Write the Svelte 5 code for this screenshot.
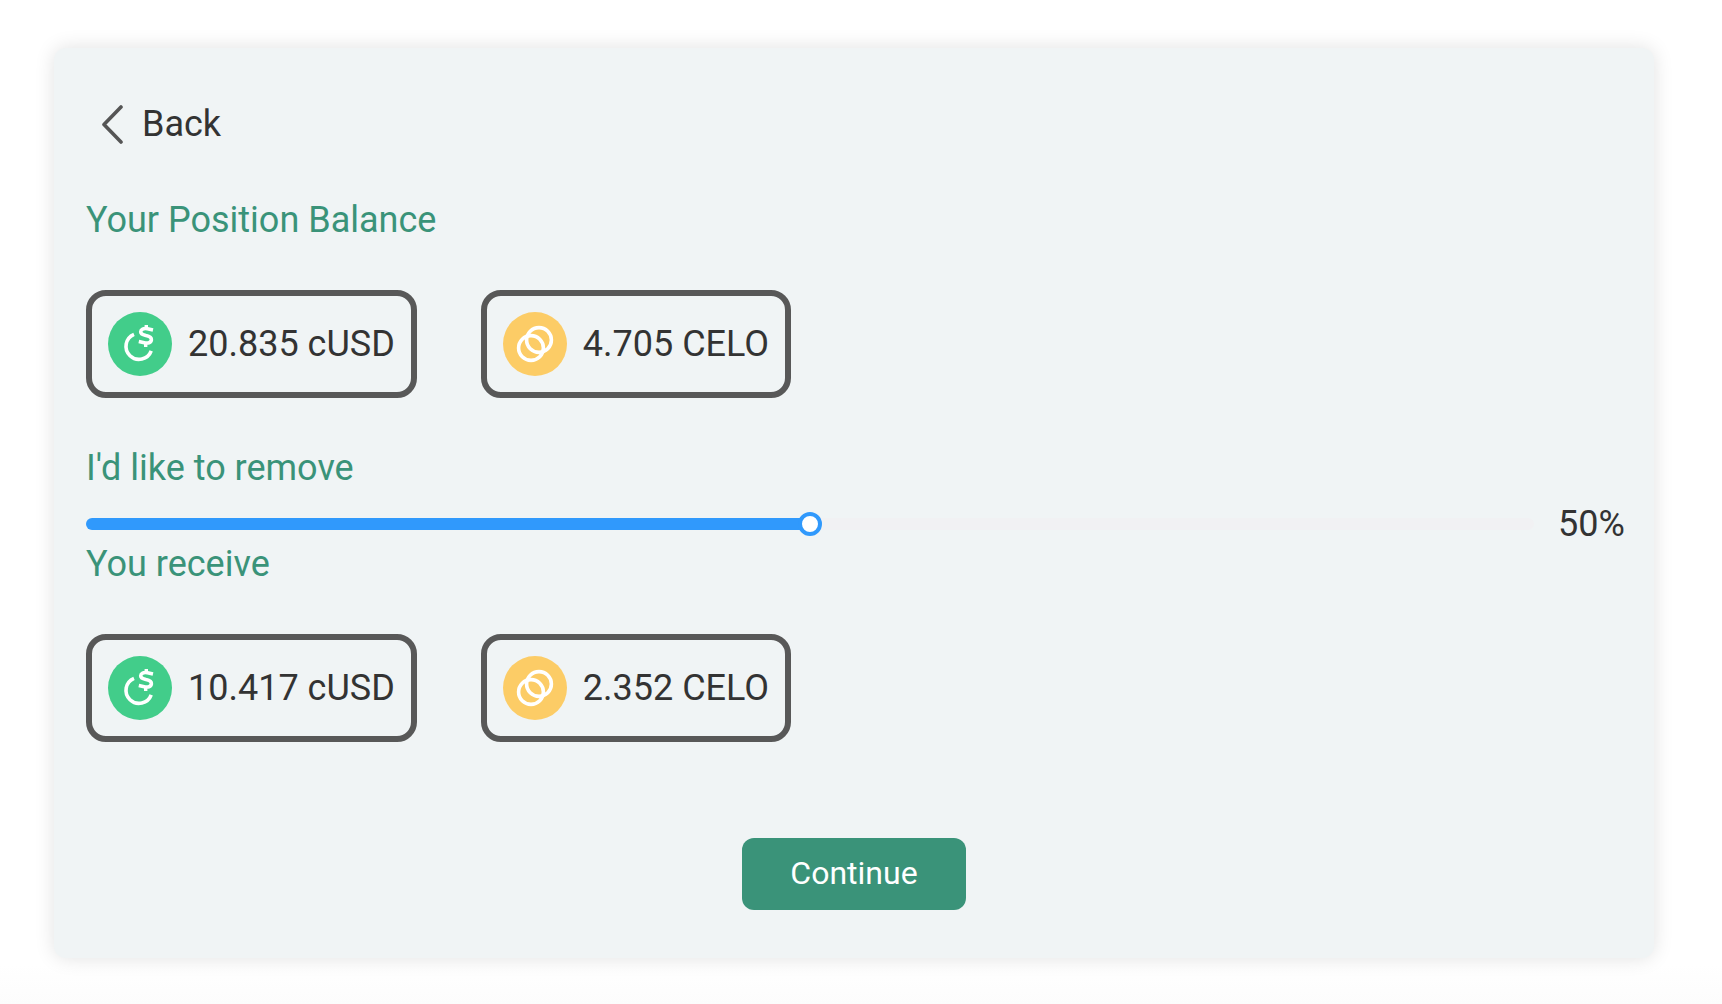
<script>
  let percent = $state(50);

  const position = [
    { token: 'cUSD', amount: '20.835' },
    { token: 'CELO', amount: '4.705' }
  ];
  const full = [
    { token: 'cUSD', amount: 20.8349 },
    { token: 'CELO', amount: 4.7049 }
  ];
  const received = $derived(
    full.map(({ token, amount }) => ({
      token,
      amount: (Math.floor(amount * percent * 10) / 1000).toFixed(3)
    }))
  );
</script>

{#snippet tokens(items)}
  <ul class="tokens">
    {#each items as item (item.token)}
      <li class="token">
        {#if item.token === 'cUSD'}
          <svg class="coin" viewBox="0 0 64 64" aria-hidden="true">
            <circle cx="32" cy="32" r="32" fill="#42cd8a" />
            <g fill="none" stroke="#fff" stroke-width="3.6">
              <path d="M26 22.3A13 13 0 1 0 43.2 38.8" />
              <path d="M45 18L39.5 16.8C35.4 16 32.8 17.2 32.7 19.8C32.6 22.4 35.2 22.9 38 23.5C41.2 24.1 43.6 25 43.4 27.8C43.1 30.8 39.8 31.5 36.3 30.8L30.8 29.6" stroke-width="3.6" />
              <path d="M38.3 13v4M37.7 30.5v4.4" stroke-width="3.4" />
            </g>
          </svg>
        {:else}
          <svg class="coin" viewBox="0 0 64 64" aria-hidden="true">
            <circle cx="32" cy="32" r="32" fill="#fccc66" />
            <g fill="none" stroke="#fff" stroke-width="3.6">
              <circle cx="36" cy="28" r="12.4" />
              <circle cx="28" cy="36" r="12.4" />
            </g>
          </svg>
        {/if}
        <span>{item.amount} {item.token}</span>
      </li>
    {/each}
  </ul>
{/snippet}

<div class="page">
  <main class="card">
    <button class="back" type="button">
      <svg viewBox="0 0 24 40" aria-hidden="true">
        <path d="M21 3L4 20.5L21 38" fill="none" stroke="#555" stroke-width="3.6" stroke-linecap="round" stroke-linejoin="round" />
      </svg>
      Back
    </button>

    <h2>Your Position Balance</h2>
    {@render tokens(position)}

    <h2><label for="amount">I'd like to remove</label></h2>
    <div class="slider">
      <input
        id="amount"
        type="range"
        min="0"
        max="100"
        bind:value={percent}
        style:--fill="{percent}%"
      />
      <output for="amount">{percent}%</output>
    </div>

    <h2>You receive</h2>
    {@render tokens(received)}

    <button class="continue" type="button">Continue</button>
  </main>
</div>

<style>
  :global(body) {
    margin: 0;
    background: #fff;
  }

  .page {
    box-sizing: border-box;
    min-height: 100vh;
    padding: 48px 68px 46px 54px;
    background: linear-gradient(to top, #fcfcfc, #fff 40px);
    font-family: Roboto, sans-serif;
    font-size: 36px;
    line-height: 40px;
    color: #333;
  }

  .card {
    display: flex;
    flex-direction: column;
    padding: 56px 32px 48px;
    border-radius: 12px;
    background: #f0f4f5;
    box-shadow: 0 0 20px rgba(0, 0, 0, 0.12);
  }

  button {
    border: 0;
    font: inherit;
    cursor: pointer;
  }

  .back {
    display: flex;
    align-items: center;
    align-self: flex-start;
    gap: 18px;
    margin: 0 0 56px 14px;
    padding: 0;
    background: none;
    color: #333;
  }

  .back svg {
    width: 24px;
    height: 40px;
  }

  h2 {
    margin: 0;
    font: inherit;
    color: #3a9379;
  }

  .tokens {
    display: flex;
    flex-wrap: wrap;
    gap: 64px;
    margin: 50px 0;
    padding: 0;
    list-style: none;
  }

  .token {
    display: flex;
    align-items: center;
    gap: 16px;
    padding: 16px;
    border: 6px solid #585858;
    border-radius: 20px;
  }

  .coin {
    width: 64px;
    height: 64px;
  }

  .slider {
    display: flex;
    align-items: center;
    gap: 24px;
    margin-top: 16px;
  }

  input {
    flex: 1;
    min-width: 0;
    height: 24px;
    margin: 0;
    appearance: none;
    background: none;
    cursor: pointer;
  }

  input::-webkit-slider-runnable-track {
    height: 12px;
    border-radius: 6px;
    background: linear-gradient(to right, #3099fc var(--fill), #f1f1f3 var(--fill));
  }

  input::-webkit-slider-thumb {
    appearance: none;
    box-sizing: border-box;
    width: 24px;
    height: 24px;
    margin-top: -6px;
    border: 4px solid #3099fc;
    border-radius: 50%;
    background: #fff;
  }

  output {
    width: 64px;
    white-space: nowrap;
  }

  .continue {
    align-self: center;
    margin-top: 46px;
    padding: 15px 48px 17px;
    border-radius: 12px;
    background: #3a9379;
    font-size: 32px;
    color: #fff;
  }
</style>
